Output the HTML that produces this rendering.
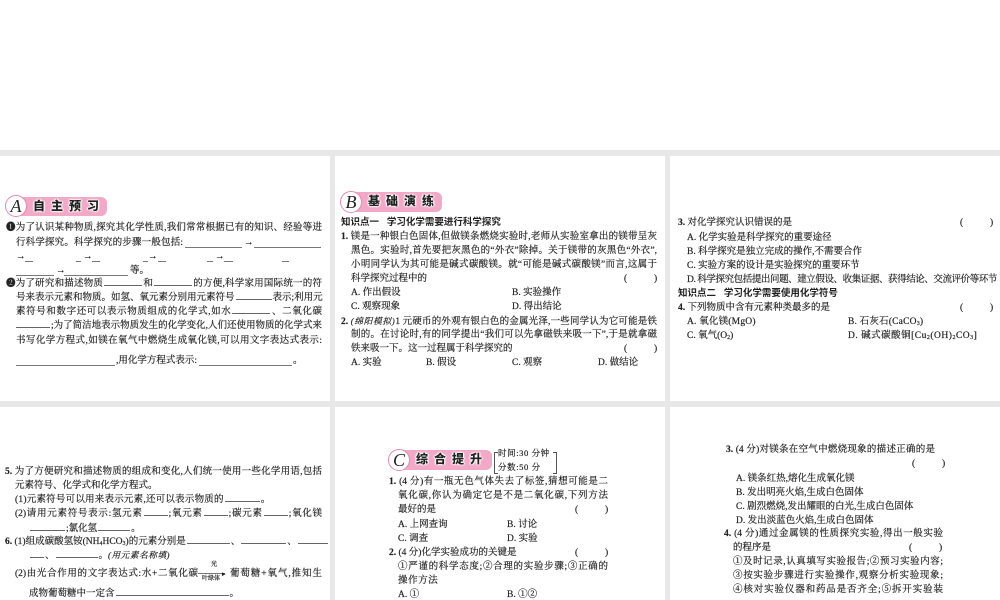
<!DOCTYPE html>
<html><head><meta charset="utf-8"><style>
html,body{margin:0;padding:0;background:#fff}
#w{position:relative;width:1000px;height:600px;overflow:hidden;background:#e8e8e8}
#f{position:absolute;left:0;top:0;width:1000px;height:600px;filter:blur(.35px);font-family:"Liberation Serif","Noto Serif CJK SC",serif;font-size:9.5px;color:#222;-webkit-text-stroke:.18px #222}
.n{position:absolute;background:#fff}
.l{position:absolute;height:14px;line-height:14px;white-space:nowrap}
.j{text-align:justify;text-align-last:justify;text-justify:inter-character}
.h{font-family:"Liberation Sans","Noto Sans CJK SC",sans-serif;font-weight:700;color:#222;-webkit-text-stroke:0}
.b{display:inline-block;height:0;border-bottom:1px solid #666;margin:0 1px;-webkit-text-stroke:0}
.u{position:absolute;height:0;border-top:1px solid #777}
sub{font-size:6px;line-height:0;vertical-align:-1px}
.ban{position:absolute;height:19px;background:#f2a9c8;border-radius:6px}
.cir{position:absolute;width:20px;height:20px;border:1.3px solid #e68ab2;border-radius:50%;background:#fff;text-align:center;line-height:20px;font-family:"Liberation Serif",serif;font-style:italic;font-size:18px;color:#222;-webkit-text-stroke:0}
.bt{position:absolute;height:19px;line-height:19px;font-family:"Liberation Sans","Noto Sans CJK SC",sans-serif;font-weight:900;font-size:12px;color:#222;white-space:nowrap;-webkit-text-stroke:0;text-shadow:0 0 2px #fff,0 0 2px #fff,0 0 2px #fff,1px 0 1px #fff,-1px 0 1px #fff}
.y{font-size:8.6px;letter-spacing:.6px}
</style></head><body><div id="w"><div id="f">
<div class="n" style="left:0;top:0;width:1000px;height:150px"></div>
<div class="n" style="left:0;top:156px;width:330px;height:245px"></div>
<div class="n" style="left:335px;top:156px;width:330px;height:245px"></div>
<div class="n" style="left:670px;top:156px;width:330px;height:245px"></div>
<div class="n" style="left:0;top:407px;width:330px;height:193px"></div>
<div class="n" style="left:335px;top:407px;width:330px;height:193px"></div>
<div class="n" style="left:670px;top:407px;width:330px;height:193px"></div>

<!-- A -->
<div class="ban" style="left:12px;top:197px;width:95px"></div>
<div class="cir" style="left:5px;top:195px">A</div>
<div class="bt" style="left:33px;top:197px;letter-spacing:6px">自主预习</div>
<div class="l j" style="left:6px;top:221px;width:316px">❶为了认识某种物质,探究其化学性质,我们常常根据已有的知识、经验等进</div>
<div class="l j" style="left:16px;top:236px;width:167px">行科学探究。科学探究的步骤一般包括:</div>
<div class="u" style="left:185px;top:247px;width:57px"></div><div class="l" style="left:244px;top:236px">→</div><div class="u" style="left:254px;top:247px;width:67px"></div>
<div class="l" style="left:16px;top:250px">→</div><div class="u" style="left:25px;top:261px;width:8px"></div>
<div class="u" style="left:76px;top:261px;width:5px"></div><div class="l" style="left:83px;top:250px">→</div><div class="u" style="left:92px;top:261px;width:8px"></div>
<div class="u" style="left:143px;top:261px;width:5px"></div><div class="l" style="left:148px;top:250px">→</div><div class="u" style="left:158px;top:261px;width:8px"></div>
<div class="u" style="left:207px;top:261px;width:6px"></div><div class="l" style="left:215px;top:250px">→</div><div class="u" style="left:224px;top:261px;width:9px"></div>
<div class="u" style="left:282px;top:261px;width:7px"></div>
<div class="u" style="left:16px;top:275px;width:38px"></div><div class="l" style="left:56px;top:264px">→</div><div class="u" style="left:64px;top:275px;width:64px"></div>
<div class="l" style="left:130px;top:264px">等。</div>
<div class="l j" style="left:6px;top:277px;width:316px">❷为了研究和描述物质<span class="b" style="width:38px"></span>和<span class="b" style="width:38px"></span>的方便,科学家用国际统一的符</div>
<div class="l j" style="left:16px;top:291px;width:306px">号来表示元素和物质。如氢、氧元素分别用元素符号<span class="b" style="width:36px"></span>表示;利用元</div>
<div class="l j" style="left:16px;top:305px;width:306px">素符号和数字还可以表示物质组成的化学式,如水<span class="b" style="width:38px"></span>、二氧化碳</div>
<div class="l j" style="left:16px;top:319px;width:306px"><span class="b" style="width:34px;margin-left:0"></span>;为了简洁地表示物质发生的化学变化,人们还使用物质的化学式来</div>
<div class="l j" style="left:16px;top:334px;width:306px">书写化学方程式,如镁在氧气中燃烧生成氧化镁,可以用文字表达式表示:</div>
<div class="u" style="left:16px;top:365px;width:99px"></div>
<div class="l" style="left:116px;top:354px">,用化学方程式表示:</div>
<div class="u" style="left:199px;top:365px;width:93px"></div>
<div class="l" style="left:293px;top:354px">。</div>

<!-- B -->
<div class="ban" style="left:347px;top:192px;width:95px;height:20px"></div>
<div class="cir" style="left:340px;top:191px">B</div>
<div class="bt" style="left:368px;top:192px;letter-spacing:6px">基础演练</div>
<div class="l h" style="left:341px;top:216px">知识点一&nbsp;&nbsp;&nbsp;学习化学需要进行科学探究</div>
<div class="l j" style="left:341px;top:230px;width:316px"><b>1.</b> 镁是一种银白色固体,但做镁条燃烧实验时,老师从实验室拿出的镁带呈灰</div>
<div class="l j" style="left:351px;top:244px;width:306px">黑色。实验时,首先要把灰黑色的“外衣”除掉。关于镁带的灰黑色“外衣”,</div>
<div class="l j" style="left:351px;top:258px;width:306px">小明同学认为其可能是碱式碳酸镁。就“可能是碱式碳酸镁”而言,这属于</div>
<div class="l" style="left:351px;top:272px">科学探究过程中的</div>
<div class="l" style="left:624px;top:272px">(</div><div class="l" style="left:654px;top:272px">)</div>
<div class="l" style="left:351px;top:286px">A. 作出假设</div><div class="l" style="left:512px;top:286px">B. 实验操作</div>
<div class="l" style="left:351px;top:300px">C. 观察现象</div><div class="l" style="left:512px;top:300px">D. 得出结论</div>
<div class="l j" style="left:341px;top:314px;width:316px"><b>2.</b> <i class="y">(绵阳模拟)</i>1 元硬币的外观有银白色的金属光泽,一些同学认为它可能是铁</div>
<div class="l j" style="left:351px;top:328px;width:306px">制的。在讨论时,有的同学提出“我们可以先拿磁铁来吸一下”,于是就拿磁</div>
<div class="l" style="left:351px;top:342px">铁来吸一下。这一过程属于科学探究的</div>
<div class="l" style="left:624px;top:342px">(</div><div class="l" style="left:654px;top:342px">)</div>
<div class="l" style="left:351px;top:356px">A. 实验</div><div class="l" style="left:426px;top:356px">B. 假设</div><div class="l" style="left:512px;top:356px">C. 观察</div><div class="l" style="left:598px;top:356px">D. 做结论</div>

<!-- 3 -->
<div class="l" style="left:678px;top:216px"><b>3.</b> 对化学探究认识错误的是</div>
<div class="l" style="left:960px;top:216px">(</div><div class="l" style="left:990px;top:216px">)</div>
<div class="l" style="left:687px;top:231px">A. 化学实验是科学探究的重要途径</div>
<div class="l" style="left:687px;top:245px">B. 科学探究是独立完成的操作,不需要合作</div>
<div class="l" style="left:687px;top:259px">C. 实验方案的设计是实验探究的重要环节</div>
<div class="l" style="left:687px;top:273px;letter-spacing:-.42px">D. 科学探究包括提出问题、建立假设、收集证据、获得结论、交流评价等环节</div>
<div class="l h" style="left:678px;top:287px">知识点二&nbsp;&nbsp;&nbsp;学习化学需要使用化学符号</div>
<div class="l" style="left:678px;top:301px"><b>4.</b> 下列物质中含有元素种类最多的是</div>
<div class="l" style="left:960px;top:301px">(</div><div class="l" style="left:990px;top:301px">)</div>
<div class="l" style="left:687px;top:315px;letter-spacing:.2px">A. 氧化镁(MgO)</div><div class="l" style="left:848px;top:315px;letter-spacing:.2px">B. 石灰石(CaCO<sub>3</sub>)</div>
<div class="l" style="left:687px;top:329px">C. 氧气(O<sub>2</sub>)</div><div class="l" style="left:848px;top:329px;letter-spacing:.5px">D. 碱式碳酸铜[Cu<sub>2</sub>(OH)<sub>2</sub>CO<sub>3</sub>]</div>

<!-- 5,6 -->
<div class="l j" style="left:5px;top:465px;width:317px"><b>5.</b> 为了方便研究和描述物质的组成和变化,人们统一使用一些化学用语,包括</div>
<div class="l" style="left:15px;top:479px">元素符号、化学式和化学方程式。</div>
<div class="l" style="left:15px;top:493px;letter-spacing:.22px">(1)元素符号可以用来表示元素,还可以表示物质的<span class="b" style="width:35px"></span>。</div>
<div class="l j" style="left:15px;top:507px;width:307px">(2)请用元素符号表示:氢元素<span class="b" style="width:24px"></span>;氧元素<span class="b" style="width:24px"></span>;碳元素<span class="b" style="width:24px"></span>;氧化镁</div>
<div class="l" style="left:30px;top:522px"><span class="b" style="width:35px;margin-left:0"></span>;氯化氢<span class="b" style="width:32px"></span>。</div>
<div class="l j" style="left:5px;top:535px;width:317px"><b>6.</b> (1)组成碳酸氢铵(NH<sub>4</sub>HCO<sub>3</sub>)的元素分别是<span class="b" style="width:43px"></span>、<span class="b" style="width:45px"></span>、<span class="b" style="width:30px;margin-right:0"></span></div>
<div class="l" style="left:30px;top:548px"><span class="b" style="width:14px;margin-left:0"></span>、<span class="b" style="width:42px"></span>。<i class="y">(用元素名称填)</i></div>
<div class="l j" style="left:15px;top:567px;width:183px">(2)由光合作用的文字表达式:水+二氧化碳</div>
<div class="l" style="left:211px;top:561px;font-size:6px;line-height:8px;height:8px">光</div>
<div class="u" style="left:198px;top:573px;width:27px"></div>
<div class="l" style="left:202px;top:575px;font-size:6px;line-height:8px;height:8px">叶绿体</div>
<div class="l" style="left:222px;top:567px;font-size:7px">▸</div>
<div class="l j" style="left:230px;top:567px;width:92px">葡萄糖+氧气,推知生</div>
<div class="l" style="left:29px;top:587px">成物葡萄糖中一定含<span class="b" style="width:113px"></span>。</div>

<!-- C -->
<div class="ban" style="left:395px;top:450px;width:97px;height:20px"></div>
<div class="cir" style="left:388px;top:449px">C</div>
<div class="bt" style="left:416px;top:450px;letter-spacing:6px">综合提升</div>
<div class="l" style="left:498px;top:446px;font-size:8.5px;letter-spacing:.6px">时间:30 分钟</div>
<div class="l" style="left:498px;top:460px;font-size:8.5px;letter-spacing:.6px">分数:50 分</div>
<div style="position:absolute;left:494px;top:452px;width:3px;height:20px;border:1px solid #555;border-right:0"></div>
<div style="position:absolute;left:553px;top:452px;width:3px;height:20px;border:1px solid #555;border-left:0"></div>
<div class="l j" style="left:389px;top:475px;width:219px"><b>1.</b> (4 分)有一瓶无色气体失去了标签,猜想可能是二</div>
<div class="l j" style="left:398px;top:489px;width:210px">氧化碳,你认为确定它是不是二氧化碳,下列方法</div>
<div class="l" style="left:398px;top:503px">最好的是</div>
<div class="l" style="left:575px;top:503px">(</div><div class="l" style="left:605px;top:503px">)</div>
<div class="l" style="left:398px;top:518px">A. 上网查询</div><div class="l" style="left:507px;top:518px">B. 讨论</div>
<div class="l" style="left:398px;top:532px">C. 调查</div><div class="l" style="left:507px;top:532px">D. 实验</div>
<div class="l" style="left:389px;top:546px"><b>2.</b> (4 分)化学实验成功的关键是</div>
<div class="l" style="left:575px;top:546px">(</div><div class="l" style="left:605px;top:546px">)</div>
<div class="l j" style="left:398px;top:560px;width:210px">①严谨的科学态度;②合理的实验步骤;③正确的</div>
<div class="l" style="left:398px;top:574px;letter-spacing:.6px">操作方法</div>
<div class="l" style="left:398px;top:588px">A. ①</div><div class="l" style="left:507px;top:588px">B. ①②</div>

<!-- 3,4 right -->
<div class="l j" style="left:726px;top:443px;width:209px"><b>3.</b> (4 分)对镁条在空气中燃烧现象的描述正确的是</div>
<div class="l" style="left:912px;top:457px">(</div><div class="l" style="left:942px;top:457px">)</div>
<div class="l" style="left:736px;top:472px">A. 镁条红热,熔化生成氧化镁</div>
<div class="l" style="left:736px;top:486px">B. 发出明亮火焰,生成白色固体</div>
<div class="l" style="left:736px;top:500px">C. 剧烈燃烧,发出耀眼的白光,生成白色固体</div>
<div class="l" style="left:736px;top:514px">D. 发出淡蓝色火焰,生成白色固体</div>
<div class="l j" style="left:724px;top:527px;width:219px"><b>4.</b> (4 分)通过金属镁的性质探究实验,得出一般实验</div>
<div class="l" style="left:733px;top:541px">的程序是</div>
<div class="l" style="left:909px;top:541px">(</div><div class="l" style="left:939px;top:541px">)</div>
<div class="l j" style="left:733px;top:555px;width:210px">①及时记录,认真填写实验报告;②预习实验内容;</div>
<div class="l j" style="left:733px;top:569px;width:210px">③按实验步骤进行实验操作,观察分析实验现象;</div>
<div class="l j" style="left:733px;top:583px;width:210px">④核对实验仪器和药品是否齐全;⑤拆开实验装</div>
</div></div></body></html>
